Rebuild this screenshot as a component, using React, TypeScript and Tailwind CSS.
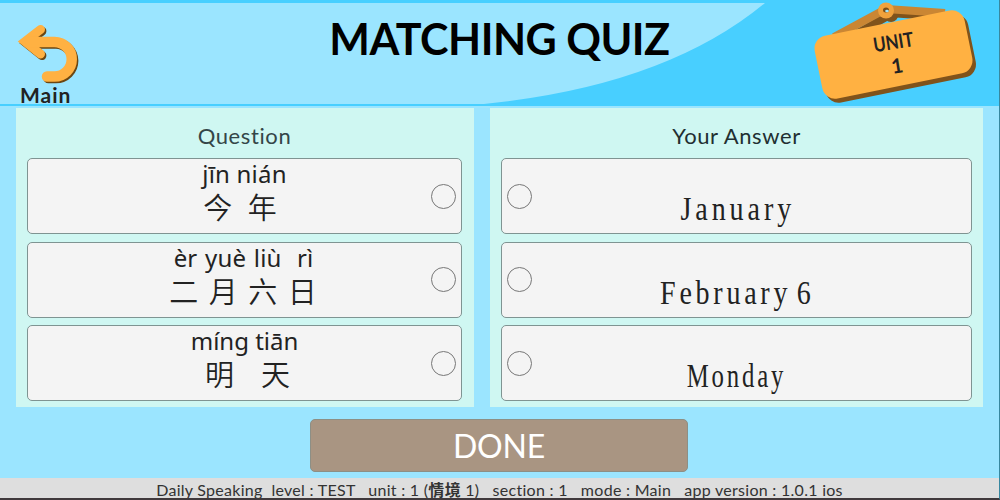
import { useState } from 'react';

interface Row {
  id: number;
  pinyin: string;
  hanzi: string;
  pinyinClass: string;
  hanziClass: string;
  answer: string;
  answerClass: string;
}

const rows: Row[] = [
  {
    id: 1,
    pinyin: 'jīn nián',
    hanzi: '今 年',
    pinyinClass: 'tracking-[0.2px]',
    hanziClass: '-ml-[9px] [word-spacing:9px]',
    answer: 'January',
    answerClass: 'tracking-[4.6px] scale-x-[0.85] pl-[3px]',
  },
  {
    id: 2,
    pinyin: 'èr yuè liù  rì',
    hanzi: '二 月 六 日',
    pinyinClass: 'tracking-[0.1px] [word-spacing:1.5px] -ml-[2px]',
    hanziClass: '-ml-[3px] [word-spacing:4px]',
    answer: 'February 6',
    answerClass: 'tracking-[4.4px] scale-x-[0.85] [word-spacing:-6px] pl-[2px]',
  },
  {
    id: 3,
    pinyin: 'míng tiān',
    hanzi: '明  天',
    pinyinClass: 'tracking-[0px]',
    hanziClass: 'ml-[6px] [word-spacing:7px]',
    answer: 'Monday',
    answerClass: 'tracking-[3.8px] scale-x-[0.75]',
  },
];

function BackArrow() {
  return (
    <svg width="64" height="62" viewBox="16 23 64 62" fill="none">
      <g stroke="#6b4612" transform="translate(1.4 1.6)">
        <path d="M40.5 29.5L25 41.5L40.5 54" strokeWidth="9" strokeLinecap="round" />
        <path d="M30 42H54.5A17.2 17.2 0 0 1 54.5 76.5H47" strokeWidth="10.5" strokeLinecap="round" />
      </g>
      <g stroke="#ffb142">
        <path d="M40.5 29.5L25 41.5L40.5 54" strokeWidth="9" strokeLinecap="round" />
        <path d="M30 42H54.5A17.2 17.2 0 0 1 54.5 76.5H47" strokeWidth="10.5" strokeLinecap="round" />
      </g>
    </svg>
  );
}

function UnitSign() {
  return (
    <div className="absolute top-0 left-[810px] h-[106px] w-[172px]">
      <svg width="172" height="106" viewBox="810 0 172 106">
        <path d="M886 17L846 40M889 13L948 17" stroke="#80531b" strokeWidth="8" />
        <circle cx="891" cy="14.5" r="7.5" fill="#80531b" />
        <path d="M884 10L834 37M886 9L945 13" stroke="#ca8633" strokeWidth="8" />
        <circle cx="886" cy="10.5" r="8" fill="#f0a23c" />
        <ellipse cx="886" cy="10" rx="3" ry="2.5" fill="#7a4d16" />
        <ellipse cx="887" cy="11" rx="1.8" ry="1.2" fill="#9be5ff" />
        <rect x="-76.5" y="-32" width="153" height="64" rx="13" fill="#80531b" transform="translate(897 58.5) rotate(-11.5)" />
        <rect x="-76.5" y="-32" width="153" height="64" rx="13" fill="#ffb142" transform="translate(893.5 54.5) rotate(-11.5)" />
      </svg>
      <div className="absolute top-[32px] left-[44px] flex w-[82px] -rotate-[9deg] flex-col items-center gap-[6px] font-['Lato',sans-serif] text-[20px] leading-[18px] font-bold text-[#222]">
        <div className="scale-x-[0.84]">UNIT</div>
        <div>1</div>
      </div>
    </div>
  );
}

function Dot({ active, onClick }: { active: boolean; onClick: () => void }) {
  return (
    <button
      onClick={onClick}
      className={`h-[25px] w-[25px] shrink-0 rounded-full border border-[#777] ${active ? 'bg-[#ffb142]' : 'bg-transparent'}`}
    />
  );
}

export default function App() {
  const [question, setQuestion] = useState<number | null>(null);
  const [answer, setAnswer] = useState<number | null>(null);

  const reset = () => {
    setQuestion(null);
    setAnswer(null);
  };

  return (
    <div className="flex h-[500px] w-[1000px] flex-col overflow-hidden border-r border-b-2 border-r-[#37879f] border-b-[#40393c] bg-[#9be5ff]">
      <header className="relative h-[106px] shrink-0 border-t-[3px] border-b-2 border-[#48cfff]">
        <svg className="absolute inset-0" width="999" height="101" viewBox="0 3 999 101">
          <path d="M484 104Q665 86 765 3H999V104Z" fill="#48cfff" />
        </svg>
        <button className="absolute top-[20px] left-[16px] flex w-[64px] flex-col items-start">
          <BackArrow />
          <span className="-mt-[3px] ml-[4px] font-['Lato',sans-serif] text-[21px] leading-[26px] font-bold tracking-[1px] text-[#222]">
            Main
          </span>
        </button>
        <h1 className="relative pt-[10px] text-center font-['Lato',sans-serif] text-[43px] leading-[52px] font-bold tracking-[-0.5px] whitespace-nowrap text-black">
          MATCHING QUIZ
        </h1>
        <div className="absolute -top-[3px] left-0">
          <UnitSign />
        </div>
      </header>

      <main className="mt-[2px] ml-[16px] flex h-[299px] shrink-0 gap-[16px]">
        <section className="w-[458px] bg-[#cff7f2] pt-[11px] pr-[12px] pl-[11px]">
          <h2 className="h-[39px] text-center font-['Lato',sans-serif] text-[22px] leading-[34px] tracking-[0.6px] text-[#344648]">
            Question
          </h2>
          <div className="flex flex-col gap-[7.5px]">
            {rows.map((row) => (
              <div
                key={row.id}
                className="relative flex h-[76px] items-center justify-end rounded-[5px] border border-[#7f9492] bg-[#f4f4f4] pr-[5px]"
              >
                <div className="absolute inset-0 text-center whitespace-pre text-[#222]">
                  <div className={`font-['Noto_Sans',sans-serif] text-[24px] leading-[30px] ${row.pinyinClass}`}>
                    {row.pinyin}
                  </div>
                  <div className={`font-['Noto_Sans_CJK_SC',sans-serif] text-[29px] leading-[34px] font-[350] ${row.hanziClass}`}>
                    {row.hanzi}
                  </div>
                </div>
                <div className="relative flex">
                  <Dot active={question === row.id} onClick={() => setQuestion(row.id)} />
                </div>
              </div>
            ))}
          </div>
        </section>

        <section className="w-[493px] bg-[#cff7f2] px-[11px] pt-[11px]">
          <h2 className="h-[39px] text-center font-['Lato',sans-serif] text-[22px] leading-[34px] tracking-[0.6px] text-[#222f31]">
            Your Answer
          </h2>
          <div className="flex flex-col gap-[7.5px]">
            {rows.map((row) => (
              <div
                key={row.id}
                className="relative flex h-[76px] items-center rounded-[5px] border border-[#7f9492] bg-[#f4f4f4] pl-[5px]"
              >
                <div
                  className={`absolute inset-0 pt-[31px] text-center font-['Liberation_Serif',serif] text-[33px] leading-[38px] whitespace-pre text-[#222] ${row.answerClass}`}
                >
                  {row.answer}
                </div>
                <div className="relative flex">
                  <Dot active={answer === row.id} onClick={() => setAnswer(row.id)} />
                </div>
              </div>
            ))}
          </div>
        </section>
      </main>

      <button
        onClick={reset}
        className="mt-[12px] ml-[310px] h-[53px] w-[378px] shrink-0 rounded-[5px] border border-[#8d8f85] bg-[#a99582] pt-px font-['Lato',sans-serif] text-[32px] leading-[50px] tracking-[-0.2px] text-white"
      >
        DONE
      </button>

      <footer className="mt-[6px] h-[20px] shrink-0 bg-[#dedede] text-center font-['Lato','Noto_Sans_CJK_TC',sans-serif] text-[16px] leading-[23px] tracking-[0.28px] whitespace-pre text-[#333]">
        Daily Speaking{'  '}level : TEST{'   '}unit : 1 (<b>情境</b> 1){'   '}section : 1{'   '}mode : Main{'   '}app version : 1.0.1 ios
      </footer>
    </div>
  );
}
